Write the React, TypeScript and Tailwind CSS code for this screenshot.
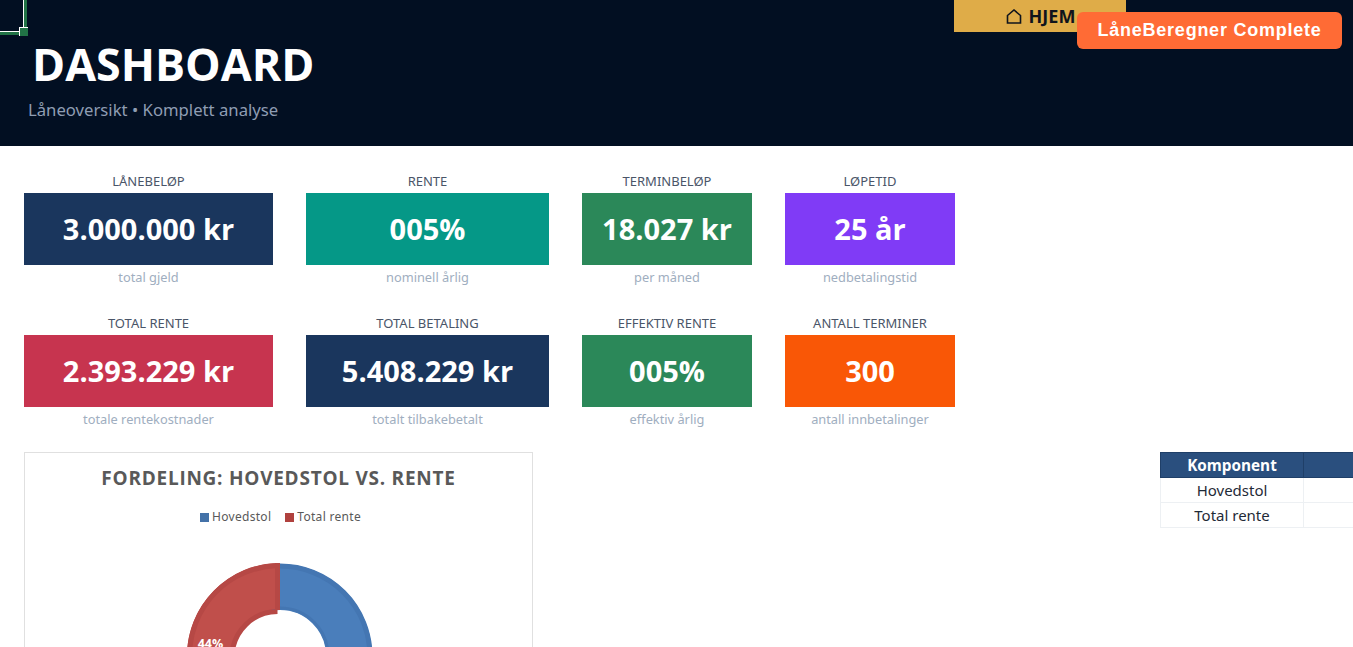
const rows = [
  [
    { label: 'LÅNEBELØP', value: '3.000.000 kr', sub: 'total gjeld', bg: 'bg-[#1a365d]', w: 'w-[249px]' },
    { label: 'RENTE', value: '005%', sub: 'nominell årlig', bg: 'bg-[#059887]', w: 'w-[243px]' },
    { label: 'TERMINBELØP', value: '18.027 kr', sub: 'per måned', bg: 'bg-[#2b8859]', w: 'w-[170px]' },
    { label: 'LØPETID', value: '25 år', sub: 'nedbetalingstid', bg: 'bg-[#803bf6]', w: 'w-[170px]' },
  ],
  [
    { label: 'TOTAL RENTE', value: '2.393.229 kr', sub: 'totale rentekostnader', bg: 'bg-[#c7344f]', w: 'w-[249px]' },
    { label: 'TOTAL BETALING', value: '5.408.229 kr', sub: 'totalt tilbakebetalt', bg: 'bg-[#1a365d]', w: 'w-[243px]' },
    { label: 'EFFEKTIV RENTE', value: '005%', sub: 'effektiv årlig', bg: 'bg-[#2b8859]', w: 'w-[170px]' },
    { label: 'ANTALL TERMINER', value: '300', sub: 'antall innbetalinger', bg: 'bg-[#f95706]', w: 'w-[170px]' },
  ],
]

function Kpi({ label, value, sub, bg, w }: { label: string; value: string; sub: string; bg: string; w: string }) {
  return (
    <div className={`${w} flex flex-col items-center`}>
      <div className="h-[16px] text-[13px] leading-[16px] text-[#4a5568]">{label}</div>
      <div className={`${bg} mt-[4px] flex h-[72px] w-full items-center justify-center font-['Open_Sans'] text-[29px] font-bold text-white`}>
        {value}
      </div>
      <div className="mt-[4px] text-[12.8px] leading-[16px] text-[#a0aec0]">{sub}</div>
    </div>
  )
}

function Donut() {
  return (
    <svg width="200" height="84" viewBox="0 0 200 84" className="mx-auto mt-[38px] block translate-x-[1px]">
      {/* 56 / 44 split from 12 o'clock, the page cuts it off just above the centre */}
      <circle cx="100" cy="93" r="69" fill="none" stroke="#4a7ebb" strokeWidth="46" />
      <circle cx="100" cy="93" r="90" fill="none" stroke="#4476b2" strokeWidth="5" />
      <circle cx="100" cy="93" r="48" fill="none" stroke="#4476b2" strokeWidth="3" />
      <path d="M100 0 A93 93 0 0 0 7 93 L53 93 A47 47 0 0 1 100 46 Z" fill="#c04f4b" />
      <path d="M97.5 2.5 A90.5 90.5 0 0 0 9.5 93 M97.5 48.5 A46 46 0 0 0 52 93" fill="none" stroke="#b64845" strokeWidth="5" />
      <rect x="95" y="0" width="5" height="47" fill="#b64845" />
      <text x="30.5" y="85" textAnchor="middle" fill="#ffffff" fontSize="12.5" fontWeight="700" fontFamily="Open Sans, sans-serif">44%</text>
    </svg>
  )
}

export default function App() {
  return (
    <div className="relative h-[647px] w-[1353px] overflow-hidden bg-white font-['Noto_Sans',sans-serif]">
      <header className="h-[146px] bg-[#020f22] pl-[28px]">
        <div className="flex">
          <div className="w-[926px] shrink-0 pt-[34px]">
            <h1 className="pl-[4px] font-['Open_Sans'] text-[44.8px] font-bold leading-[60px] text-white">DASHBOARD</h1>
            <p className="mt-[4px] text-[16.7px] leading-[24px] text-[#8f9db3]">Låneoversikt • Komplett analyse</p>
          </div>
          <div className="flex h-[32px] w-[172px] items-center justify-center gap-[7px] pl-[1px] bg-[#dfac48] font-['Open_Sans'] text-[18px] font-bold text-[#10141c]">
            <svg width="16" height="15" viewBox="0 0 16 15" fill="none" stroke="currentColor" strokeWidth="1.6">
              <path d="M1.5 6.5 L8 1 L14.5 6.5 V14 H1.5 Z" />
            </svg>
            HJEM
          </div>
        </div>
      </header>

      {/* Excel cell cursor */}
      <div className="absolute left-0 top-0 h-[35px] w-[27px] border-b-[3px] border-r-[3px] border-[#217346]">
        <div className="h-full w-full border-b border-r border-white" />
      </div>
      <div className="absolute left-[19px] top-[27px] h-[9px] w-[9px] border-l border-t border-white bg-[#217346]" />

      <div className="absolute left-[1077px] top-[12px] flex h-[37px] w-[265px] items-center justify-center rounded-[6px] bg-[#ff6b35] font-['Liberation_Sans'] text-[18px] font-bold tracking-[0.75px] text-white">
        LåneBeregner Complete
      </div>

      <main className="px-[24px] pt-[27px]">
        <div className="flex flex-col gap-[30px]">
          {rows.map((row, i) => (
            <div key={i} className="flex gap-[33px]">
              {row.map((k) => (
                <Kpi key={k.label} {...k} />
              ))}
            </div>
          ))}
        </div>

        <div className="mt-[25px] flex items-start">
          <section className="h-[260px] w-[509px] shrink-0 border border-[#e0e0e0] pt-[12px]">
            <h2 className="text-center font-['Open_Sans'] text-[19px] font-bold leading-[26px] tracking-[0.75px] text-[#595959]">
              FORDELING: HOVEDSTOL VS. RENTE
            </h2>
            <div className="mt-[18px] flex h-[16px] items-center justify-center pl-[4px] text-[12px] tracking-[0.3px] text-[#595959]">
              <span className="mr-[3px] h-[9px] w-[9px] bg-[#4472a8]" />
              <span>Hovedstol</span>
              <span className="ml-[14px] mr-[3px] h-[9px] w-[9px] bg-[#b0413e]" />
              <span>Total rente</span>
            </div>
            <Donut />
          </section>

          <table className="ml-[627px] w-[260px] shrink-0 table-fixed border-collapse text-[15px] text-[#1f2a37]">
            <thead>
              <tr className="h-[25px] bg-[#2a4f7e] font-['Open_Sans'] text-[15.3px] font-bold text-white">
                <th className="w-[143px] border border-[#1f3f68] p-0 font-bold">Komponent</th>
                <th className="border border-[#1f3f68] p-0" />
              </tr>
            </thead>
            <tbody>
              {['Hovedstol', 'Total rente'].map((name) => (
                <tr key={name} className="h-[25px]">
                  <td className="border border-[#edf0f3] p-0 text-center">{name}</td>
                  <td className="border border-[#edf0f3] p-0" />
                </tr>
              ))}
            </tbody>
          </table>
        </div>
      </main>
    </div>
  )
}
